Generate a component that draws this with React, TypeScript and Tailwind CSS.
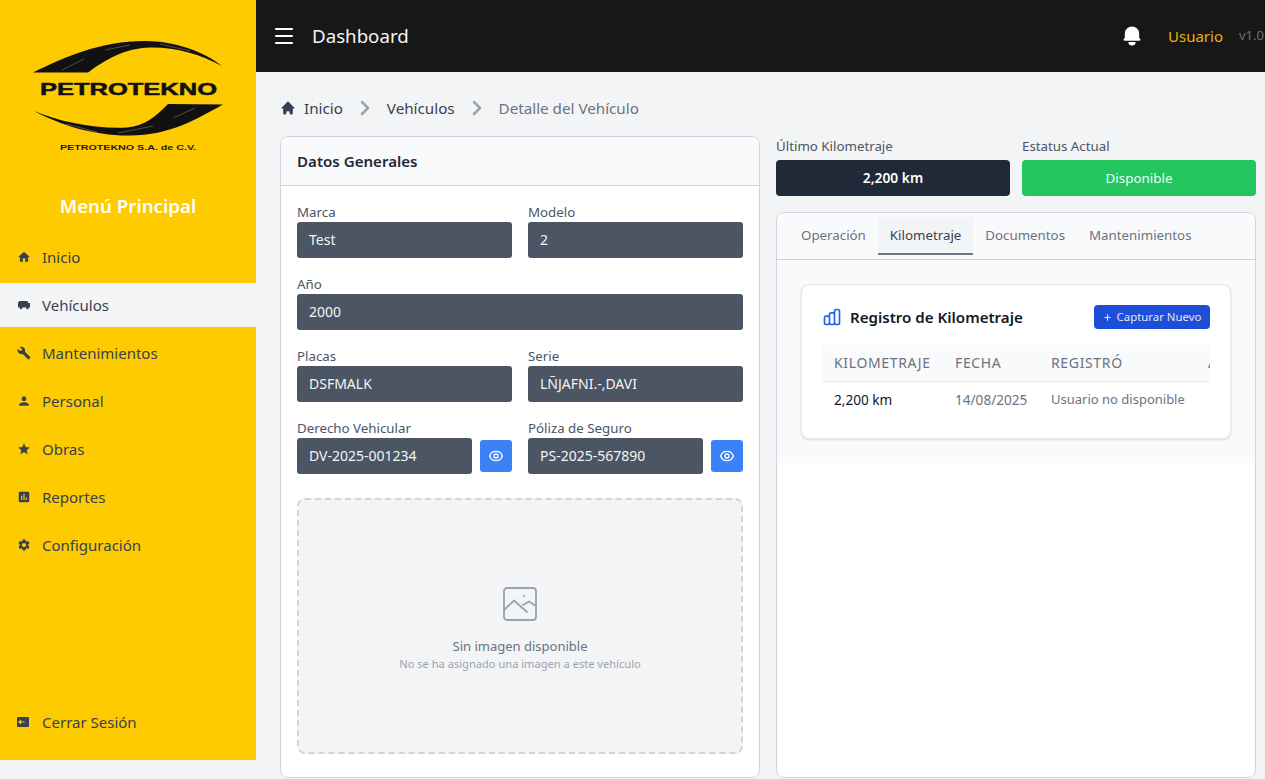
import React from 'react';
import { ChevronRight, Menu, Plus } from 'lucide-react';
import { HiBell, HiHome, HiOutlineChartBar, HiOutlineEye } from 'react-icons/hi';
import { MdAssessment, MdBuild, MdHome, MdPerson, MdSettings, MdStar } from 'react-icons/md';

const TruckIcon = ({ className }: { className?: string }) => (
  <svg viewBox="0 0 14 14" fill="currentColor" className={className}>
    <path d="M2.500 3 H10.500 L11 5 H13 V9.500 H1 V4.500 Z" />
    <circle cx="4" cy="10" r="1.300" />
    <circle cx="10.500" cy="10" r="1.300" />
  </svg>
);

const navItems = [
  { label: 'Inicio', icon: MdHome },
  { label: 'Vehículos', icon: TruckIcon, active: true },
  { label: 'Mantenimientos', icon: MdBuild },
  { label: 'Personal', icon: MdPerson },
  { label: 'Obras', icon: MdStar },
  { label: 'Reportes', icon: MdAssessment },
  { label: 'Configuración', icon: MdSettings },
];

const Logo = () => (
  <svg viewBox="0 0 256 170" className="w-[256px] h-[170px] shrink-0">
    <path d="M33 72.5 C65 57 100 41 145 41 C175 41 205 52 222 66 C200 54 175 47 150 47.500 C125 48 105 60 88 72.500 Z" fill="#111" />
    <path d="M34 111 C60 122 95 129 127 127.500 C145 126 155 117 168 104 L223 104.500 C195 120 170 135 130 135.500 C95 136 60 125 34 111 Z" fill="#111" />
    <path d="M62 70 L84 59 M105 50 L130 45 M160 44 L190 51 M66 124 L97 132 M118 133 L153 126 M173 118 L195 108" stroke="#8a8a8a" strokeWidth="0.500" fill="none" />
    <text x="40" y="95" textLength="177" lengthAdjust="spacingAndGlyphs" fontFamily="'Liberation Sans', sans-serif" fontWeight="700" fontSize="16.500" stroke="#111" strokeWidth="0.500" fill="#111">PETROTEKNO</text>
    <text x="60" y="150" textLength="136" lengthAdjust="spacingAndGlyphs" fontFamily="'Liberation Sans', sans-serif" fontWeight="700" fontSize="7.500" fill="#222">PETROTEKNO S.A. de C.V.</text>
  </svg>
);

const LogoutIcon = () => (
  <svg viewBox="0 0 14 14" className="w-[14px] h-[14px]">
    <rect x="0" y="2" width="12" height="10" rx="1" fill="#374151" />
    <path d="M2 7 H7.500 M4 5.200 L2 7 L4 8.800" stroke="#facc15" strokeWidth="1.200" fill="none" />
  </svg>
);

const Sidebar = () => (
  <aside className="w-[256px] h-[760px] shrink-0 bg-[#fdcb00] flex flex-col pb-[16px]">
    <Logo />
    <h2 className="mt-[22px] text-[18.700px] leading-[28px] font-semibold text-white text-center">Menú Principal</h2>
    <nav className="mt-[15px] flex flex-col gap-1">
      {navItems.map((item) => (
        <a key={item.label} className={`h-[44px] flex items-center pl-[17px] text-[15px] text-[#374151] ${item.active ? 'bg-[#f3f4f6]' : ''}`}>
          <span className="w-[25px] flex">
            <item.icon className="w-[14px] h-[14px] -mt-[1px]" />
          </span>
          {item.label}
        </a>
      ))}
    </nav>
    <a className="mt-auto h-[44px] flex items-center pl-[17px] text-[15px] text-[#374151]">
      <span className="w-[25px] flex">
        <LogoutIcon />
      </span>
      Cerrar Sesión
    </a>
  </aside>
);

const Header = () => (
  <header className="h-[72px] bg-[#171717] flex items-center pl-4 overflow-hidden">
    <Menu className="w-6 h-6 text-white mr-4" strokeWidth={2} />
    <h1 className="mt-[1px] text-[18.700px] text-[#f3f4f6]">Dashboard</h1>
    <div className="ml-auto flex items-center">
      <HiBell className="w-6 h-6 text-white" />
      <span className="ml-6 text-[15px] text-[#eab308]">Usuario</span>
      <span className="ml-4 text-[13px] text-[#6b7280] whitespace-nowrap w-[26px]">v1.0</span>
    </div>
  </header>
);

const Breadcrumb = () => (
  <div className="flex items-center h-[24px] text-[15.200px]">
    <HiHome className="w-4 h-4 text-[#374151]" />
    <span className="ml-2 text-[#374151]">Inicio</span>
    <ChevronRight className="mx-[10px] w-6 h-6 text-[#9ca3af]" strokeWidth={2.500} />
    <span className="text-[#374151]">Vehículos</span>
    <ChevronRight className="mx-[10px] w-6 h-6 text-[#9ca3af]" strokeWidth={2.500} />
    <span className="text-[#6b7280]">Detalle del Vehículo</span>
  </div>
);

const Field = ({ label, value, className = '' }: { label: string; value: string; className?: string }) => (
  <div className={className}>
    <div className="h-[20px] text-[13.300px] leading-[20px] text-[#4b5563]">{label}</div>
    <div className="h-[36px] rounded-[3px] bg-[#4b5563] px-3 flex items-center text-sm text-[#f3f4f6]">{value}</div>
  </div>
);

const DocField = ({ label, value }: { label: string; value: string }) => (
  <div>
    <div className="h-[20px] text-[13.300px] leading-[20px] text-[#4b5563]">{label}</div>
    <div className="flex items-center gap-2">
      <div className="flex-1 h-[36px] rounded-[3px] bg-[#4b5563] px-3 flex items-center text-sm text-[#f3f4f6]">{value}</div>
      <button className="w-8 h-8 rounded-[3px] bg-[#3b82f6] flex items-center justify-center text-white">
        <HiOutlineEye className="w-4 h-4" />
      </button>
    </div>
  </div>
);

const GeneralCard = () => (
  <section className="h-[642px] bg-white border border-[#d1d5db] rounded-lg overflow-hidden">
    <div className="h-[49px] bg-[#f9fafb] border-b border-[#d1d5db] px-4 flex items-center">
      <h3 className="text-[15.100px] font-semibold text-[#1f2937]">Datos Generales</h3>
    </div>
    <div className="p-4">
      <div className="grid grid-cols-2 gap-4">
        <Field label="Marca" value="Test" />
        <Field label="Modelo" value="2" />
        <Field label="Año" value="2000" className="col-span-2" />
        <Field label="Placas" value="DSFMALK" />
        <Field label="Serie" value="LÑJAFNI.-,DAVI" />
        <DocField label="Derecho Vehicular" value="DV-2025-001234" />
        <DocField label="Póliza de Seguro" value="PS-2025-567890" />
      </div>
      <div className="mt-6 pt-[6px] h-[256px] rounded-lg border-2 border-dashed border-[#d1d5db] bg-[#f3f4f6] flex flex-col items-center justify-center">
        <svg viewBox="0 0 36 36" fill="none" stroke="#9ca3af" strokeWidth="1.800" strokeLinecap="round" strokeLinejoin="round" className="w-9 h-9">
          <rect x="2" y="2" width="32" height="32" rx="3" />
          <path d="M2 24 L12 14.500 L25 26" />
          <path d="M21 19 L27 15.500 L34 20" />
          <circle cx="22" cy="10" r="0.300" />
        </svg>
        <p className="mt-[14px] text-[13px] leading-[20px] text-[#6b7280]">Sin imagen disponible</p>
        <p className="text-[11.100px] leading-[16px] text-[#9ca3af]">No se ha asignado una imagen a este vehículo</p>
      </div>
    </div>
  </section>
);

const StatBox = ({ label, value, className }: { label: string; value: string; className: string }) => (
  <div>
    <div className="h-[24px] text-[13.300px] leading-[20px] text-[#4b5563]">{label}</div>
    <div className={`h-[36px] rounded-[4px] flex items-center justify-center ${className}`}>{value}</div>
  </div>
);

const RecordsCard = () => (
  <div className="bg-white border border-[#e5e7eb] rounded-lg shadow-sm px-5 pt-[20px] pb-[20px]">
    <div className="flex items-center justify-between h-[24px] mb-4">
      <div className="flex items-center gap-2">
        <HiOutlineChartBar className="w-5 h-5 text-[#2563eb]" />
        <h4 className="text-[15.100px] font-semibold text-[#111827]">Registro de Kilometraje</h4>
      </div>
      <button className="h-[24px] w-[116px] rounded-[4px] bg-[#1d4ed8] flex items-center justify-center gap-[5px] text-[11.400px] text-[#e5e7eb]">
        <Plus className="w-[9px] h-[9px]" strokeWidth={3} />
        Capturar Nuevo
      </button>
    </div>
    <div className="overflow-hidden">
      <table className="w-[420px] table-fixed text-left border-collapse">
        <thead>
          <tr className="h-[36px] bg-[#f9fafb] border-b border-[#e5e7eb] text-sm tracking-[0.650px] text-[#6b7280]">
            <th className="w-[121px] px-3 font-normal">KILOMETRAJE</th>
            <th className="w-[96px] px-3 font-normal">FECHA</th>
            <th className="w-[157px] px-3 font-normal">REGISTRÓ</th>
            <th className="px-3 font-normal">ACCIONES</th>
          </tr>
        </thead>
        <tbody>
          <tr className="h-[37px] text-[13.600px]">
            <td className="px-3 text-[#111827]">2,200 km</td>
            <td className="px-3 text-[#6b7280]">14/08/2025</td>
            <td className="px-3 text-[13px] text-[#6b7280] whitespace-nowrap">Usuario no disponible</td>
            <td />
          </tr>
        </tbody>
      </table>
    </div>
  </div>
);

const tabs = ['Operación', 'Kilometraje', 'Documentos', 'Mantenimientos'];

const TabsCard = () => (
  <section className="mt-4 h-[566px] bg-white border border-[#d1d5db] rounded-lg overflow-hidden">
    <div className="h-[47px] bg-[#f9fafb] border-b border-[#d1d5db] flex items-start pt-1 pl-3">
      {tabs.map((t) => (
        <div key={t} className={`h-[38px] px-3 flex items-center text-[13.300px] ${t === 'Kilometraje' ? 'pt-[1px] bg-[#f3f4f6] border-b-2 border-[#6b7280] text-[#374151]' : 'pb-[1px] text-[#6b7280]'}`}>
          {t}
        </div>
      ))}
    </div>
    <div className="bg-[#f9fafb] p-6">
      <RecordsCard />
    </div>
  </section>
);

export default function App() {
  return (
    <div className="h-[779px] overflow-hidden flex bg-[#f3f4f6]">
      <Sidebar />
      <div className="flex-1 min-w-0">
        <Header />
        <main className="pl-6 pr-[9px] pt-6">
          <Breadcrumb />
          <div className="mt-4 grid grid-cols-2 gap-4">
            <GeneralCard />
            <div>
              <div className="grid grid-cols-2 gap-3">
                <StatBox label="Último Kilometraje" value="2,200 km" className="bg-[#1f2937] text-[13.800px] text-white font-semibold" />
                <StatBox label="Estatus Actual" value="Disponible" className="bg-[#22c55e] text-[13.400px] text-[#f0fdf4]" />
              </div>
              <TabsCard />
            </div>
          </div>
        </main>
      </div>
    </div>
  );
}
